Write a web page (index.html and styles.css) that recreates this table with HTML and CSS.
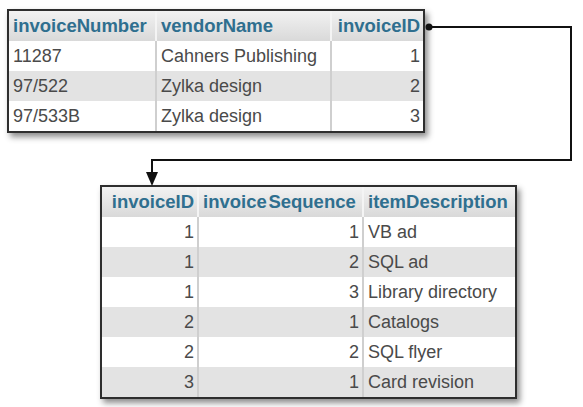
FILE: index.html
```html
<!DOCTYPE html>
<html>
<head>
<meta charset="utf-8">
<link rel="stylesheet" href="styles.css">
</head>
<body>
<div class="canvas">
  <table class="grid invoices">
    <colgroup><col class="c1"><col class="c2"><col class="c3"></colgroup>
    <thead>
      <tr><th>invoiceNumber</th><th>vendorName</th><th class="num">invoiceID</th></tr>
    </thead>
    <tbody>
      <tr><td>11287</td><td>Cahners Publishing</td><td class="num">1</td></tr>
      <tr><td>97/522</td><td>Zylka design</td><td class="num">2</td></tr>
      <tr><td>97/533B</td><td>Zylka design</td><td class="num">3</td></tr>
    </tbody>
  </table>

  <table class="grid items">
    <colgroup><col class="d1"><col class="d2"><col class="d3"></colgroup>
    <thead>
      <tr><th class="num">invoiceID</th><th class="seq">invoice Sequence</th><th>itemDescription</th></tr>
    </thead>
    <tbody>
      <tr><td class="num">1</td><td class="num">1</td><td>VB ad</td></tr>
      <tr><td class="num">1</td><td class="num">2</td><td>SQL ad</td></tr>
      <tr><td class="num">1</td><td class="num">3</td><td>Library directory</td></tr>
      <tr><td class="num">2</td><td class="num">1</td><td>Catalogs</td></tr>
      <tr><td class="num">2</td><td class="num">2</td><td>SQL flyer</td></tr>
      <tr><td class="num">3</td><td class="num">1</td><td>Card revision</td></tr>
    </tbody>
  </table>

  <svg class="connector" width="583" height="407" viewBox="0 0 583 407">
    <circle cx="429" cy="27" r="3.5" fill="#111"/>
    <path d="M429 27 H571 V160 H152 V173" fill="none" stroke="#111" stroke-width="2"/>
    <polygon points="146,172 158,172 152,186" fill="#111"/>
  </svg>
</div>
</body>
</html>
```

FILE: styles.css
```css
html, body {
  margin: 0;
  padding: 0;
  background: #fff;
}

.canvas {
  position: relative;
  width: 583px;
  height: 407px;
  overflow: hidden;
  padding-top: 9px;
  box-sizing: border-box;
  font-family: "Liberation Sans", Arial, sans-serif;
}

.grid {
  border-collapse: separate;
  border-spacing: 0;
  border: 2px solid #2e2e2e;
  box-shadow: 3px 4px 6px rgba(0, 0, 0, 0.45);
  table-layout: fixed;
  font-size: 18px;
}

.grid th,
.grid td {
  height: 30px;
  padding: 0 3px 0 4px;
  box-sizing: border-box;
  white-space: nowrap;
  overflow: hidden;
  text-align: left;
  line-height: 30px;
}

.grid th {
  background: linear-gradient(#f2f2f2, #d9d9d9);
  color: #2f6f8f;
  font-weight: bold;
  font-size: 18.5px;
}

.grid td {
  color: #4a4a4a;
}

.grid th + th {
  border-left: 2px solid #f4f4f4;
}

.grid td + td {
  border-left: 2px solid #cfcfcf;
}

.grid tbody tr:nth-child(even) td {
  background: #e3e3e3;
}

.grid tbody tr:nth-child(odd) td {
  background: #fff;
}

.grid .num {
  text-align: right;
}

.invoices {
  margin-left: 7px;
  width: 418px;
}

.c1 { width: 146px; }
.c2 { width: 175px; }
.c3 { width: 93px; }

.items {
  margin-left: 100px;
  margin-top: 52px;
  width: 417px;
}

.d1 { width: 95px; }
.d2 { width: 165px; }
.d3 { width: 153px; }

.seq {
  word-spacing: -3.5px;
}

.connector {
  position: absolute;
  left: 0;
  top: 0;
  pointer-events: none;
}
```
